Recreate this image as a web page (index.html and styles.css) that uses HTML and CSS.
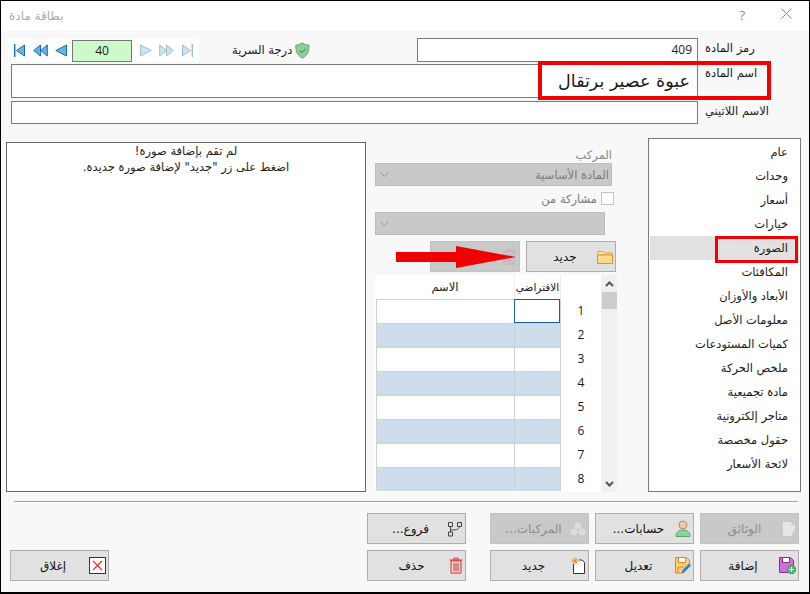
FILE: index.html
```html
<!DOCTYPE html>
<html lang="ar">
<head>
<meta charset="utf-8">
<title>بطاقة مادة</title>
<link rel="stylesheet" href="styles.css">
</head>
<body>
<div class="window">
  <header class="titlebar">
    <span class="title-text" dir="rtl">بطاقة مادة</span>
    <span class="help">?</span>
    <svg class="close-x" width="11" height="11" viewBox="0 0 11 11"><path d="M.5.5l10 10M10.5.5l-10 10" stroke="#8a8a8a" fill="none"/></svg>
  </header>

  <section class="row row-code">
    <div class="nav">
      <svg class="nav-ic nav-first" width="11" height="13" viewBox="0 0 11 13"><path d="M.7 0v13" stroke="#0f6fb8" stroke-width="1.4"/><path d="M10.5 1v11L2.5 6.5z" fill="#6fb2e2" stroke="#0f6fb8"/></svg>
      <svg class="nav-ic nav-prev2" width="15" height="13" viewBox="0 0 15 13"><path d="M7.5 1v11L.7 6.5z" fill="#6fb2e2" stroke="#0f6fb8"/><path d="M14.3 1v11L7.5 6.5z" fill="#6fb2e2" stroke="#0f6fb8"/></svg>
      <svg class="nav-ic nav-prev" width="12" height="13" viewBox="0 0 12 13"><path d="M11.5 1v11L.8 6.5z" fill="#6fb2e2" stroke="#0f6fb8"/></svg>
      <div class="nav-num">40</div>
      <svg class="nav-ic nav-next" width="12" height="13" viewBox="0 0 12 13"><path d="M.5 1v11l10.7-5.500z" fill="#cfe3ef" stroke="#9dbdd2"/></svg>
      <svg class="nav-ic nav-next2" width="15" height="13" viewBox="0 0 15 13"><path d="M.7 1v11l6.800-5.500z" fill="#cfe3ef" stroke="#9dbdd2"/><path d="M7.500 1v11l6.800-5.500z" fill="#cfe3ef" stroke="#9dbdd2"/></svg>
      <svg class="nav-ic nav-last" width="11" height="13" viewBox="0 0 11 13"><path d="M.5 1v11l8-5.500z" fill="#cfe3ef" stroke="#9dbdd2"/><path d="M10.300 0v13" stroke="#9dbdd2" stroke-width="1.400"/></svg>
    </div>
    <div class="security">
      <span dir="rtl">درجة السرية</span>
      <svg width="15" height="17" viewBox="0 0 15 17"><path d="M7.500.7C5.500 2.300 3 3 .8 3c0 5.500.6 10 6.700 13.300C13.600 13 14.200 8.500 14.200 3 12 3 9.500 2.300 7.500.7z" fill="#8fcf9c" stroke="#5aa76d"/><path d="M4.300 8.300l2.400 2.400 4-4" fill="none" stroke="#4d9b60" stroke-width="1.200"/></svg>
    </div>
    <div class="field field-code">409</div>
    <label class="field-label">رمز المادة</label>
  </section>

  <section class="row row-name">
    <div class="field field-wide field-name" dir="rtl">عبوة عصير برتقال</div>
    <label class="field-label label-top">اسم المادة</label>
    <div class="mark mark-name"></div>
  </section>

  <section class="row row-latin">
    <div class="field field-wide"></div>
    <label class="field-label">الاسم اللاتيني</label>
  </section>

  <main class="main">
    <div class="picture-panel" dir="rtl">
      <p>لم تقم بإضافة صورة!</p>
      <p>اضغط على زر "جديد" لإضافة صورة جديدة.</p>
    </div>

    <div class="center">
      <div class="muted-label" dir="rtl">المركب</div>
      <div class="select select-main" >
        <svg width="9" height="5" viewBox="0 0 9 5"><path d="M.5.5l4 4 4-4" fill="none" stroke="#9a9a9a"/></svg>
        <span dir="rtl">المادة الأساسية</span>
      </div>
      <div class="share" dir="rtl"><span class="check"></span><span>مشاركة من</span></div>
      <div class="select select-share">
        <svg width="9" height="5" viewBox="0 0 9 5"><path d="M.5.5l4 4 4-4" fill="none" stroke="#9a9a9a"/></svg>
      </div>
      <div class="pic-actions">
        <div class="btn btn-disabled btn-pic">
          <span class="btn-text"></span>
          <svg width="16" height="17" viewBox="0 0 16 17"><path d="M3 4v12h10V4M1.500 3.500h13M6 3V1.500h4V3M6 6v8M8 6v8M10 6v8" fill="none" stroke="#d9a3a3"/></svg>
        </div>
        <div class="btn btn-pic">
          <span class="btn-text">جديد</span>
          <svg width="16" height="14" viewBox="0 0 16 14"><path d="M1 3V1.500h5L7.500 3H15v2H1z" fill="#fdf0c0" stroke="#e8912a"/><path d="M.5 5h15v8.500H.5z" fill="#fcdc8c" stroke="#e8912a"/></svg>
        </div>
      </div>
      <div class="grid-wrap">
        <div class="scrollbar">
          <svg class="sb-arrow" width="9" height="6" viewBox="0 0 9 6"><path d="M1 5l3.500-3.500L8 5" fill="none" stroke="#555" stroke-width="2"/></svg>
          <div class="sb-thumb"></div>
          <div class="sb-fill"></div>
          <svg class="sb-arrow" width="9" height="6" viewBox="0 0 9 6"><path d="M1 1l3.500 3.500L8 1" fill="none" stroke="#555" stroke-width="2"/></svg>
        </div>
        <div class="grid">
          <div class="g-row g-head"><div class="g-cell g-name">الاسم</div><div class="g-cell g-def">الافتراضي</div><div class="g-cell g-num"></div></div>
          <div class="g-row"><div class="g-cell g-name"></div><div class="g-cell g-def g-focus"></div><div class="g-cell g-num">1</div></div>
          <div class="g-row g-alt"><div class="g-cell g-name"></div><div class="g-cell g-def"></div><div class="g-cell g-num">2</div></div>
          <div class="g-row"><div class="g-cell g-name"></div><div class="g-cell g-def"></div><div class="g-cell g-num">3</div></div>
          <div class="g-row g-alt"><div class="g-cell g-name"></div><div class="g-cell g-def"></div><div class="g-cell g-num">4</div></div>
          <div class="g-row"><div class="g-cell g-name"></div><div class="g-cell g-def"></div><div class="g-cell g-num">5</div></div>
          <div class="g-row g-alt"><div class="g-cell g-name"></div><div class="g-cell g-def"></div><div class="g-cell g-num">6</div></div>
          <div class="g-row"><div class="g-cell g-name"></div><div class="g-cell g-def"></div><div class="g-cell g-num">7</div></div>
          <div class="g-row g-alt"><div class="g-cell g-name"></div><div class="g-cell g-def"></div><div class="g-cell g-num">8</div></div>
        </div>
      </div>
      <svg class="arrow" width="120" height="22" viewBox="0 0 120 22"><path d="M0 6h60V0l60 11-60 11v-6H0z" fill="#f00000"/></svg>
    </div>

    <nav class="tabs" dir="rtl">
      <div class="tab">عام</div>
      <div class="tab">وحدات</div>
      <div class="tab">أسعار</div>
      <div class="tab">خيارات</div>
      <div class="tab tab-active">الصورة<span class="mark mark-tab"></span></div>
      <div class="tab">المكافئات</div>
      <div class="tab">الأبعاد والأوزان</div>
      <div class="tab">معلومات الأصل</div>
      <div class="tab">كميات المستودعات</div>
      <div class="tab">ملخص الحركة</div>
      <div class="tab">مادة تجميعية</div>
      <div class="tab">متاجر إلكترونية</div>
      <div class="tab">حقول مخصصة</div>
      <div class="tab">لائحة الأسعار</div>
    </nav>
  </main>

  <div class="separator"></div>

  <footer class="footer">
    <div class="btn btn-close">
      <span class="btn-text">إغلاق</span>
      <svg width="17" height="17" viewBox="0 0 17 17"><rect x=".5" y=".5" width="16" height="16" fill="#fff" stroke="#333"/><path d="M4 4l9 9M13 4l-9 9" stroke="#ee2a2a" stroke-width="1.100"/></svg>
    </div>
    <div class="btn-grid">
      <div class="btn">
        <span class="btn-text">فروع...</span>
        <svg width="16" height="16" viewBox="0 0 16 16"><path d="M1.500 1.500h4v4h-4zM10.500 1.500h4v4h-4zM1.500 11h4v4h-4zM3.500 5.500V11M3.500 9c5 0 8 0 9-3.500" fill="none" stroke="#444"/></svg>
      </div>
      <div class="btn btn-disabled">
        <span class="btn-text">المركبات...</span>
        <svg width="16" height="16" viewBox="0 0 16 16"><circle cx="8" cy="4.500" r="3.500" fill="#dcdcdc"/><circle cx="4" cy="11" r="3.500" fill="#dcdcdc"/><circle cx="12" cy="11" r="3.500" fill="#dcdcdc"/></svg>
      </div>
      <div class="btn">
        <span class="btn-text">حسابات...</span>
        <svg width="16" height="17" viewBox="0 0 16 17"><circle cx="8" cy="5" r="4" fill="#f6c8a8" stroke="#b78a6a"/><path d="M1 16.500c0-4 2.500-6.500 7-6.500s7 2.500 7 6.500z" fill="#8fd19e" stroke="#5aa76d"/></svg>
      </div>
      <div class="btn btn-disabled">
        <span class="btn-text">الوثائق</span>
        <svg width="14" height="16" viewBox="0 0 14 16"><path d="M1 1h8l1 3h3v4l-4 7H1z" fill="#e6e6e6"/></svg>
      </div>
      <div class="btn">
        <span class="btn-text">حذف</span>
        <svg width="14" height="17" viewBox="0 0 14 17"><path d="M2 4v12h10V4zM.500 3h13M5 3V1h4v2M5 6v8M7 6v8M9 6v8" fill="none" stroke="#e0281e"/></svg>
      </div>
      <div class="btn">
        <span class="btn-text">جديد</span>
        <svg width="16" height="17" viewBox="0 0 16 17"><path d="M3.500 7v9.500h11V5.500L12 3H9" fill="#fff" stroke="#333"/><path d="M5 .5v7M1.500 4h7M2.500 1.500l5 5M7.500 1.500l-5 5" stroke="#f08a10"/></svg>
      </div>
      <div class="btn">
        <span class="btn-text">تعديل</span>
        <svg width="16" height="17" viewBox="0 0 16 17"><path d="M.5.5h11l3 3V8l-6 8H.5z" fill="#fbd27a" stroke="#e8821c"/><path d="M3.500.500h7v5h-7z" fill="#fff" stroke="#e8821c"/><path d="M3 16v-6h6" fill="none" stroke="#e8821c"/><path d="M6.500 16l1-3L14 6.500 16 8.500 9.500 15z" fill="#2f80c8"/></svg>
      </div>
      <div class="btn">
        <span class="btn-text">إضافة</span>
        <svg width="17" height="17" viewBox="0 0 17 17"><path d="M.5.5h11l3 3V10l-5 5.500h-9z" fill="#d06fd0" stroke="#8e2a9c"/><path d="M3.500.500h7v5h-7z" fill="#fff" stroke="#8e2a9c"/><circle cx="12.500" cy="12.500" r="4.200" fill="#55b878" stroke="#3a9a5c"/><path d="M12.500 10v5M10 12.500h5" stroke="#fff"/></svg>
      </div>
    </div>
  </footer>
</div>
</body>
</html>
```
FILE: styles.css
```css
* { box-sizing: border-box; }
html, body { margin: 0; padding: 0; }
body {
  width: 810px;
  height: 594px;
  overflow: hidden;
  font-family: "DejaVu Sans", "Noto Sans", sans-serif;
  font-size: 11.5px;
  color: #1a1a1a;
}
.window {
  position: relative;
  width: 810px;
  height: 594px;
  background: #f8f8f8;
  border: 1px solid #000;
  border-bottom-width: 2px;
  overflow: hidden;
}
.titlebar {
  display: flex;
  align-items: center;
  height: 30px;
  background: #fff;
  padding: 0 17px 0 8px;
}
.title-text { color: #a8a8a8; font-size: 12px; }
.help { margin-left: auto; margin-right: 36px; color: #8a8a8a; font: 13px "Open Sans", sans-serif; margin-top: -3px; }
.close-x { margin-top: -6px; }

.row { position: relative; display: flex; }
.row-code { margin: 7px 0 0 7px; height: 24px; }
.row-name { margin: 2px 0 0 10px; height: 34px; }
.row-latin { margin: 3px 0 0 10px; height: 23px; }

.nav {
  display: flex;
  align-items: center;
  width: 191px;
  height: 23px;
  margin-top: 1px;
  background: #fff;
}
.nav-ic { flex: none; }
.nav-first { margin-left: 6px; }
.nav-prev2 { margin-left: 8px; }
.nav-prev { margin-left: 7px; }
.nav-num {
  width: 60px;
  height: 22px;
  margin-left: 5px;
  background: #ccfac8;
  border: 1px solid #777;
  text-align: center;
  font: 12px/20px "Open Sans", sans-serif;
}
.nav-next { margin-left: 8px; }
.nav-next2 { margin-left: 7px; }
.nav-last { margin-left: 8px; }

.security {
  display: flex;
  align-items: center;
  gap: 3px;
  width: 78px;
  margin-left: 33px;
  height: 24px;
  white-space: nowrap;
}
.field {
  background: #fff;
  border: 1px solid #7a7a7a;
  height: 100%;
}
.field-code {
  width: 281px;
  margin-left: 107px;
  text-align: right;
  padding-right: 5px;
  font: 12px/21px "Open Sans", sans-serif;
}
.field-wide { width: 687px; }
.field-name { font-size: 17.5px; line-height: 33px; padding-right: 7px; padding-left: 0; text-align: right; }
.field-label { margin-left: 7px; line-height: 21px; white-space: nowrap; direction: rtl; }
.label-top { line-height: 19px; }

.mark { position: absolute; border: 4px solid #f00000; pointer-events: none; }
.mark-name { left: 527px; top: -3px; width: 233px; height: 39px; }
.mark-tab { left: 65px; top: 0; width: 83px; height: 27px; border-width: 3px; }

.main { display: flex; align-items: flex-start; margin-top: 14px; height: 354px; }
.picture-panel {
  width: 360px;
  height: 350px;
  margin: 4px 0 0 5px;
  background: #fff;
  border: 1px solid #666;
  text-align: center;
  padding-top: 0;
  font-size: 11.5px;
}
.picture-panel p { margin: 0; line-height: 16px; }

.center { position: relative; width: 242px; margin-left: 9px; }
.muted-label { width: 237px; height: 25px; padding-top: 10px; line-height: 15px; color: #8c8c8c; text-align: right; }
.select {
  display: flex;
  align-items: center;
  justify-content: space-between;
  height: 23px;
  padding: 0 2px 0 4px;
  background: #c9c9c9;
  border: 1px solid #bdbdbd;
  color: #7c7c7c;
}
.select-main { width: 237px; }
.select-share { width: 230px; margin-top: 1px; }
.share {
  display: flex;
  align-items: center;
  gap: 4px;
  width: 239px;
  height: 25px;
  color: #7c7c7c;
}
.check { width: 13px; height: 13px; background: #fff; border: 1px solid #c4c4c4; }
.pic-actions { display: flex; gap: 6px; margin: 6px 0 0 55px; }
.grid-wrap { display: flex; flex-direction: row-reverse; justify-content: flex-end; margin-top: 3px; height: 217px; }
.grid { width: 226px; background: #fff; }
.g-row { display: grid; grid-template-columns: 139px 46px 41px; height: 24px; }
.g-cell { border-top: 1px solid #cfcfcf; border-left: 1px solid #cfcfcf; background: #fff; }
.g-name { margin-left: 1px; }
.g-alt .g-name, .g-alt .g-def { background: #ccdeec; }
.g-num { border-top: 0; text-align: center; font: 12px/23px "Open Sans", sans-serif; }
.g-head .g-cell { border-top: 0; border-left-color: #eeeeee; text-align: center; line-height: 24px; white-space: nowrap; }
.g-head .g-name { border-left: 0; }
.g-head .g-def { font-size: 10.5px; }
.g-focus { border: 1px solid #1a5fa8; }
.scrollbar {
  display: flex;
  flex-direction: column;
  align-items: center;
  width: 16px;
  background: #f0f0f0;
}
.sb-arrow { flex: none; margin: 6px 0 5px; }
.sb-thumb { width: 15px; height: 17px; background: #cdcdcd; }
.sb-fill { flex: 1; }
.arrow { position: absolute; left: 21px; top: 108px; }

.tabs {
  width: 153px;
  height: 354px;
  margin-left: 31px;
  padding: 1px 1px 0;
  background: #fff;
  border: 1px solid #7a7a7a;
}
.tab { position: relative; height: 24px; line-height: 24px; padding-right: 11px; white-space: nowrap; }
.tab-active { background: #e1e1e1; }

.separator {
  width: 784px;
  height: 2px;
  margin: 9px 0 0 13px;
  border-top: 1px solid #a0a0a0;
  background: #fff;
}
.footer { display: flex; align-items: flex-end; margin: 10px 0 0 9px; height: 68px; }
.btn {
  display: flex;
  align-items: center;
  width: 99px;
  height: 31px;
  padding: 0 2px 0 6px;
  background: #e1e1e1;
  border: 1px solid #adadad;
  white-space: nowrap;
  color: #111;
  font-size: 12px;
}
.btn svg { flex: none; }
.btn-text { flex: 1; text-align: center; direction: rtl; }
.btn-disabled { background: #c9c9c9; border-color: #c2c2c2; color: #8c8c8c; }
.btn-pic { width: 90px; }
.btn-close { flex: none; }
.btn-grid {
  display: grid;
  grid-template-columns: 123px 105px 105px 99px;
  row-gap: 6px;
  margin-left: 258px;
}
```
